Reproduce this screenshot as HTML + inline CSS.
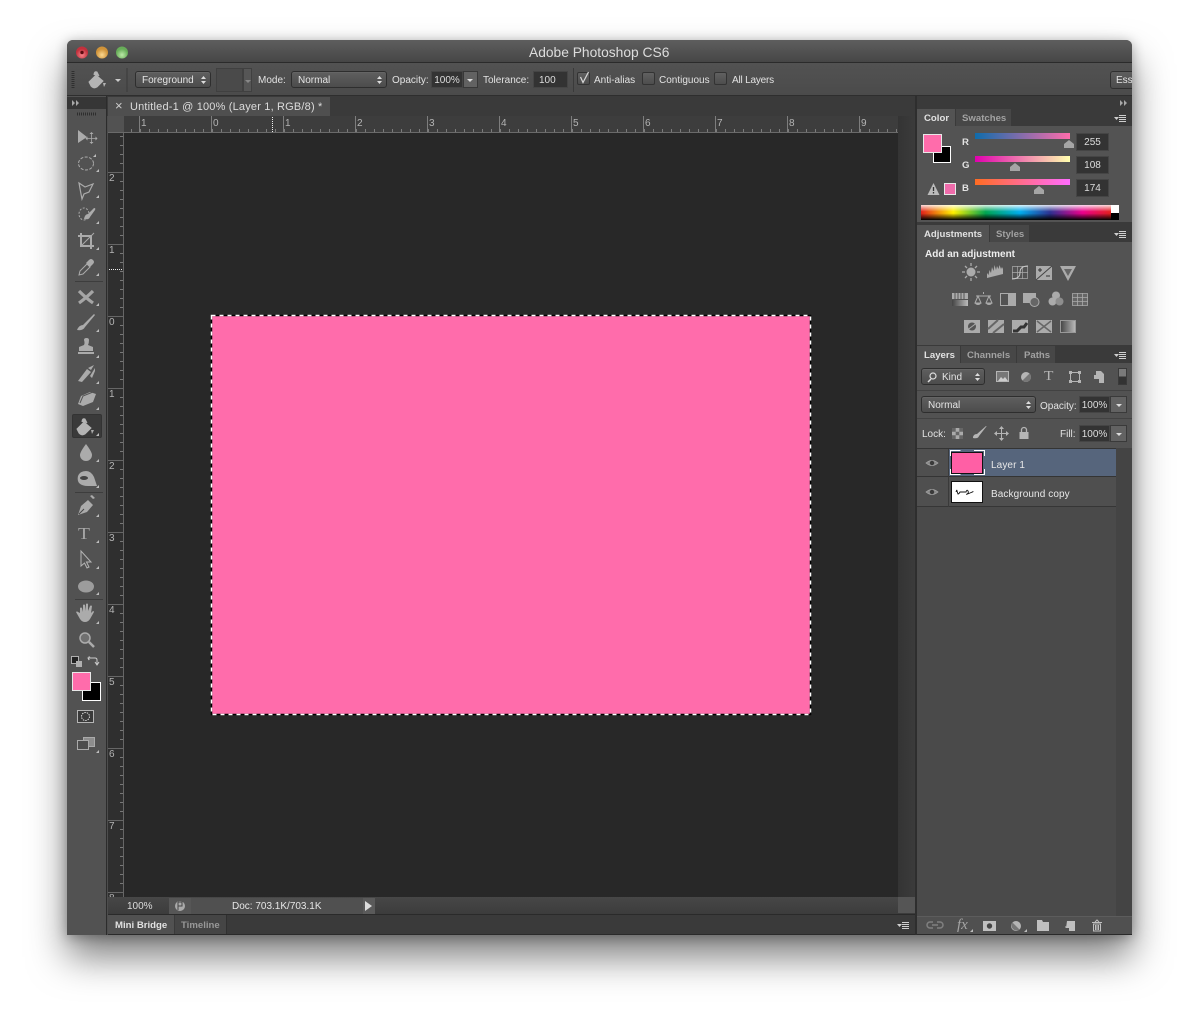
<!DOCTYPE html>
<html><head><meta charset="utf-8"><title>Adobe Photoshop CS6</title>
<style>
html,body{margin:0;padding:0;background:#fff;width:1199px;height:1024px;overflow:hidden}
body{position:relative;font-family:"Liberation Sans",sans-serif;font-size:10px;color:#e2e2e2}
.a{position:absolute}
.t{position:absolute;white-space:nowrap;line-height:12px;margin-top:1px}
.d{color:#a6a6a6}
.b{font-weight:bold;font-size:9.6px}
.sel{position:absolute;border:1px solid #2e2e2e;border-radius:3px;background:linear-gradient(#5f5f5f,#4c4c4c);box-shadow:0 1px 0 #656565 inset;box-sizing:border-box;padding-left:6px;line-height:17px;color:#e4e4e4;white-space:nowrap}
.inp{position:absolute;background:#333;border:1px solid #454545;box-sizing:border-box;color:#dedede;line-height:17px;text-align:center}
.chk{position:absolute;width:13px;height:13px;border:1px solid #333;border-radius:2px;background:linear-gradient(#616161,#4d4d4d);box-sizing:border-box}
.rl{position:absolute;color:#b4b4b4;font-size:10px;line-height:11px}
</style></head>
<body>
<!-- window -->
<div class="a" style="left:67px;top:40px;width:1065px;height:895px;border-radius:6px 6px 0 0;background:#4d4d4d;box-shadow:0 22px 38px rgba(0,0,0,.5),0 2px 12px rgba(0,0,0,.3)"></div>
<div class="a" style="left:67px;top:40px;width:1065px;height:23px;border-radius:6px 6px 0 0;background:linear-gradient(#5e5e5e,#464646);border-bottom:1px solid #2b2b2b;box-sizing:border-box"></div>
<div class="t" style="left:529px;top:44px;font-size:13.8px;line-height:16px;color:#dcdcdc">Adobe Photoshop CS6</div>
<!-- options -->
<div class="a" style="left:67px;top:63px;width:1065px;height:33px;background:linear-gradient(#525252,#4b4b4b);border-bottom:1px solid #2e2e2e;box-sizing:border-box"></div>
<div class="sel" style="left:135px;top:71px;width:76px;height:17px">Foreground</div>
<div class="a" style="left:216px;top:68px;width:27px;height:24px;background:#4a4a4a;border:1px solid #404040;box-sizing:border-box"></div>
<div class="a" style="left:243px;top:68px;width:9px;height:24px;background:#565656;border:1px solid #404040;box-sizing:border-box"></div>
<div class="t" style="left:258px;top:74px">Mode:</div>
<div class="sel" style="left:291px;top:71px;width:96px;height:17px">Normal</div>
<div class="t" style="left:392px;top:74px">Opacity:</div>
<div class="inp" style="left:431px;top:71px;width:32px;height:17px">100%</div>
<div class="a" style="left:463px;top:71px;width:15px;height:17px;background:#626262;border:1px solid #383838;box-sizing:border-box"></div>
<div class="t" style="left:483px;top:74px">Tolerance:</div>
<div class="inp" style="left:533px;top:71px;width:35px;height:17px;text-align:left;padding-left:5px">100</div>
<div class="a" style="left:573px;top:68px;width:1px;height:24px;background:#3a3a3a"></div>
<div class="chk" style="left:577px;top:72px"></div>
<div class="t" style="left:594px;top:74px">Anti-alias</div>
<div class="chk" style="left:642px;top:72px"></div>
<div class="t" style="left:659px;top:74px">Contiguous</div>
<div class="chk" style="left:714px;top:72px"></div>
<div class="t" style="left:732px;top:74px;letter-spacing:-.2px">All Layers</div>
<div class="a" style="left:1110px;top:71px;width:22px;height:18px;background:linear-gradient(#5e5e5e,#4c4c4c);border:1px solid #2f2f2f;border-right:0;border-radius:3px 0 0 3px;box-sizing:border-box;padding-left:5px;line-height:17px;color:#e4e4e4;overflow:hidden">Ess</div>
<!-- left toolbar -->
<div class="a" style="left:67px;top:96px;width:40px;height:839px;background:#525252;border-right:1px solid #2c2c2c;box-sizing:border-box"></div>
<div class="a" style="left:67px;top:97px;width:39px;height:12px;background:#363636"></div>
<div class="a" style="left:72px;top:414px;width:30px;height:24px;background:#3a3a3a;border:1px solid #333;border-radius:2px;box-sizing:border-box"></div>
<!-- doc area -->
<div class="a" style="left:107px;top:96px;width:808px;height:20px;background:#3a3a3a"></div>
<div class="a" style="left:108px;top:97px;width:222px;height:19px;background:#4f4f4f"></div>
<div class="t" style="left:115px;top:99px;font-size:13px;color:#ccc">×</div>
<div class="t" style="left:130px;top:100px;font-size:11px;line-height:13px;letter-spacing:.18px;color:#dcdcdc">Untitled-1 @ 100% (Layer 1, RGB/8) *</div>
<!-- h ruler -->
<div class="a" style="left:108px;top:116px;width:790px;height:17px;background:#3d3d3d;border-bottom:1px solid #6a6a6a;box-sizing:border-box"></div>
<div class="a" style="left:108px;top:116px;width:16px;height:16px;background:#525252"></div>
<div class="a" style="left:124px;top:129px;width:774px;height:3px;background:repeating-linear-gradient(90deg,#7b7b7b 0 1px,transparent 1px 9px);background-position:7px 0"></div>
<div class="a" style="left:124px;top:116px;width:774px;height:16px;background:repeating-linear-gradient(90deg,#7d7d7d 0 1px,transparent 1px 72px);background-position:15px 0"></div>
<div class="rl" style="left:141px;top:118px">1</div><div class="rl" style="left:213px;top:118px">0</div><div class="rl" style="left:285px;top:118px">1</div><div class="rl" style="left:357px;top:118px">2</div><div class="rl" style="left:429px;top:118px">3</div><div class="rl" style="left:501px;top:118px">4</div><div class="rl" style="left:573px;top:118px">5</div><div class="rl" style="left:645px;top:118px">6</div><div class="rl" style="left:717px;top:118px">7</div><div class="rl" style="left:789px;top:118px">8</div><div class="rl" style="left:861px;top:118px">9</div>
<!-- v ruler -->
<div class="a" style="left:108px;top:133px;width:16px;height:764px;background:#2f2f2f;border-right:1px solid #666;box-sizing:border-box"></div>
<div class="a" style="left:120px;top:133px;width:3px;height:764px;background:repeating-linear-gradient(180deg,#777 0 1px,transparent 1px 9px);background-position:0 3px"></div>
<div class="a" style="left:108px;top:133px;width:15px;height:764px;background:repeating-linear-gradient(180deg,#666 0 1px,transparent 1px 72px);background-position:0 39px"></div>
<div class="rl" style="left:109px;top:173px">2</div><div class="rl" style="left:109px;top:245px">1</div><div class="rl" style="left:109px;top:317px">0</div><div class="rl" style="left:109px;top:389px">1</div><div class="rl" style="left:109px;top:461px">2</div><div class="rl" style="left:109px;top:533px">3</div><div class="rl" style="left:109px;top:605px">4</div><div class="rl" style="left:109px;top:677px">5</div><div class="rl" style="left:109px;top:749px">6</div><div class="rl" style="left:109px;top:821px">7</div>
<div class="a" style="left:108px;top:893px;width:16px;height:4px;overflow:hidden"><div class="rl" style="left:1px;top:0">8</div></div>
<!-- canvas -->
<div class="a" style="left:124px;top:133px;width:774px;height:764px;background:#282828"></div>
<div class="a" style="left:212px;top:316px;width:598px;height:398px;background:#ff6cab"></div>
<div class="a" style="left:898px;top:116px;width:17px;height:781px;background:linear-gradient(90deg,#343434,#3b3b3b)"></div>
<div class="a" style="left:915px;top:96px;width:2px;height:839px;background:#2e2e2e"></div>
<!-- status -->
<div class="a" style="left:108px;top:897px;width:807px;height:18px;background:linear-gradient(#474747,#3c3c3c);border-bottom:1px solid #2a2a2a;box-sizing:border-box"></div>
<div class="a" style="left:898px;top:897px;width:17px;height:16px;background:#555"></div>
<div class="t" style="left:127px;top:900px;color:#ddd">100%</div>
<div class="a" style="left:169px;top:898px;width:22px;height:16px;background:#565656"></div>
<div class="a" style="left:191px;top:898px;width:172px;height:16px;background:#505050"></div>
<div class="t" style="left:232px;top:900px;color:#e6e6e6">Doc: 703.1K/703.1K</div>
<div class="a" style="left:363px;top:898px;width:12px;height:16px;background:#5a5a5a"></div>
<div class="a" style="left:108px;top:915px;width:807px;height:20px;background:#3a3a3a;border-bottom:1px solid #2a2a2a;box-sizing:border-box"></div>
<div class="a" style="left:108px;top:915px;width:66px;height:19px;background:#515151"></div>
<div class="a" style="left:175px;top:915px;width:52px;height:19px;background:#454545;border-right:1px solid #303030;box-sizing:border-box"></div>
<div class="t b" style="left:115px;top:919px">Mini Bridge</div>
<div class="t b d" style="left:181px;top:919px;color:#989898">Timeline</div>
<!-- right dock -->
<div class="a" style="left:917px;top:96px;width:215px;height:839px;background:#3a3a3a"></div>
<!-- color panel -->
<div class="a" style="left:917px;top:126px;width:215px;height:96px;background:#535353"></div>
<div class="a" style="left:917px;top:109px;width:38px;height:17px;background:#535353"></div>
<div class="a" style="left:956px;top:109px;width:55px;height:17px;background:#474747"></div>
<div class="t b" style="left:924px;top:112px">Color</div>
<div class="t b" style="left:962px;top:112px;color:#a2a2a2">Swatches</div>
<div class="a" style="left:975px;top:133px;width:95px;height:6px;background:linear-gradient(90deg,#0f6cab,#ff6cab)"></div>
<div class="a" style="left:975px;top:156px;width:95px;height:6px;background:linear-gradient(90deg,#e000ae,#ffffae)"></div>
<div class="a" style="left:975px;top:179px;width:95px;height:6px;background:linear-gradient(90deg,#ff6c22,#ff6cff)"></div>
<div class="t b" style="left:962px;top:136px">R</div>
<div class="t b" style="left:962px;top:159px">G</div>
<div class="t b" style="left:962px;top:182px">B</div>
<div class="inp" style="left:1076px;top:133px;width:33px;height:18px;line-height:17px">255</div>
<div class="inp" style="left:1076px;top:156px;width:33px;height:18px;line-height:17px">108</div>
<div class="inp" style="left:1076px;top:179px;width:33px;height:18px;line-height:17px">174</div>
<div class="a" style="left:921px;top:205px;width:190px;height:15px;background:linear-gradient(180deg,rgba(255,255,255,.85),rgba(255,255,255,0) 45%,rgba(0,0,0,0) 55%,#000 100%),linear-gradient(90deg,#e3201c 0%,#fff200 17%,#00a651 34%,#00aeef 52%,#2e3192 68%,#ec008c 85%,#e3201c 100%)"></div>
<div class="a" style="left:1111px;top:205px;width:8px;height:8px;background:#fff"></div>
<div class="a" style="left:1111px;top:213px;width:8px;height:7px;background:#000"></div>
<!-- adjustments -->
<div class="a" style="left:917px;top:242px;width:215px;height:103px;background:#535353"></div>
<div class="a" style="left:917px;top:225px;width:72px;height:17px;background:#535353"></div>
<div class="a" style="left:990px;top:225px;width:39px;height:17px;background:#474747"></div>
<div class="t b" style="left:924px;top:228px">Adjustments</div>
<div class="t b" style="left:996px;top:228px;color:#a2a2a2">Styles</div>
<div class="t b" style="left:925px;top:248px;color:#eee;font-size:10px">Add an adjustment</div>
<!-- layers -->
<div class="a" style="left:917px;top:363px;width:215px;height:85px;background:#525252"></div>
<div class="a" style="left:917px;top:390px;width:215px;height:1px;background:#424242"></div>
<div class="a" style="left:917px;top:418px;width:215px;height:1px;background:#424242"></div>
<div class="a" style="left:917px;top:346px;width:43px;height:17px;background:#525252"></div>
<div class="a" style="left:961px;top:346px;width:55px;height:17px;background:#474747"></div>
<div class="a" style="left:1017px;top:346px;width:38px;height:17px;background:#474747"></div>
<div class="t b" style="left:924px;top:349px">Layers</div>
<div class="t b" style="left:967px;top:349px;color:#a2a2a2">Channels</div>
<div class="t b" style="left:1024px;top:349px;color:#a2a2a2">Paths</div>
<div class="sel" style="left:921px;top:368px;width:64px;height:17px;padding-left:20px">Kind</div>
<div class="a" style="left:1118px;top:368px;width:9px;height:17px;background:linear-gradient(#7a7a7a 0 50%,#333 50%);border:1px solid #3a3a3a;box-sizing:border-box"></div>
<div class="sel" style="left:921px;top:396px;width:115px;height:17px">Normal</div>
<div class="t" style="left:1040px;top:400px">Opacity:</div>
<div class="inp" style="left:1079px;top:396px;width:31px;height:17px">100%</div>
<div class="a" style="left:1110px;top:396px;width:17px;height:17px;background:#626262;border:1px solid #3a3a3a;box-sizing:border-box"></div>
<div class="t" style="left:922px;top:428px">Lock:</div>
<div class="t" style="left:1060px;top:428px">Fill:</div>
<div class="inp" style="left:1079px;top:425px;width:31px;height:17px">100%</div>
<div class="a" style="left:1110px;top:425px;width:17px;height:17px;background:#626262;border:1px solid #3a3a3a;box-sizing:border-box"></div>
<!-- layer list -->
<div class="a" style="left:917px;top:448px;width:199px;height:468px;background:#4a4a4a"></div>
<div class="a" style="left:1116px;top:448px;width:16px;height:468px;background:#444"></div>
<div class="a" style="left:917px;top:448px;width:199px;height:29px;background:#56657c;border-top:1px solid #343434;border-bottom:1px solid #343434;box-sizing:border-box"></div>
<div class="a" style="left:917px;top:449px;width:31px;height:27px;background:#4f4f4f"></div>
<div class="a" style="left:917px;top:477px;width:199px;height:30px;background:#4f4f4f;border-bottom:1px solid #363636;box-sizing:border-box"></div>
<div class="a" style="left:948px;top:449px;width:1px;height:58px;background:#3a3a3a"></div>
<div class="a" style="left:951px;top:452px;width:32px;height:22px;background:#ff5fa5;border:1px solid #111;box-sizing:border-box"></div>
<div class="a" style="left:951px;top:481px;width:32px;height:22px;background:#fff;border:1px solid #111;box-sizing:border-box"></div>
<div class="t" style="left:991px;top:459px;color:#e8e8e8;letter-spacing:.1px">Layer 1</div>
<div class="t" style="left:991px;top:488px;color:#e8e8e8;letter-spacing:.1px">Background copy</div>
<div class="a" style="left:917px;top:916px;width:215px;height:19px;background:#505050;border-top:1px solid #5c5c5c;border-bottom:1px solid #2a2a2a;box-sizing:border-box"></div>
<div class="t" style="left:957px;top:917px;font:italic 15px/15px 'Liberation Serif',serif;color:#a5a5a5">fx</div>
<div class="t" style="left:78px;top:524px;font:17px/18px 'Liberation Serif',serif;color:#a8a8a8;transform:scaleX(1.15);transform-origin:left">T</div>
<div class="t" style="left:1044px;top:368px;font:14px/16px 'Liberation Serif',serif;color:#b5b5b5;transform:scaleX(1.1);transform-origin:left">T</div>
<!-- svg overlay: window lights, icons, details -->
<svg class="a" style="left:0;top:0" width="1199" height="1024" viewBox="0 0 1199 1024" xmlns="http://www.w3.org/2000/svg">
<defs>
<radialGradient id="lr" cy=".7"><stop offset="0" stop-color="#f7848a"/><stop offset="1" stop-color="#c2303c"/></radialGradient>
<radialGradient id="ly" cy=".7"><stop offset="0" stop-color="#fbd891"/><stop offset="1" stop-color="#cf9238"/></radialGradient>
<radialGradient id="lg" cy=".7"><stop offset="0" stop-color="#bce9a8"/><stop offset="1" stop-color="#67ad58"/></radialGradient>
<linearGradient id="h" x1="0" y1="0" x2="1" y2="0"><stop offset="0" stop-color="#444"/><stop offset="1" stop-color="#bbb"/></linearGradient>
<g id="menu"><path d="M0 2h5l-2.500 3z" fill="#cfcfcf"/><path d="M5 .5h7M5 2.500h7M5 4.500h7M5 6.500h7" stroke="#cfcfcf" stroke-width="1" fill="none"/></g>
<path id="tri" d="M0 3L3 0V3z" fill="#bdbdbd"/>
<g id="ud"><path d="M0 3l2.500-3 2.500 3zM0 5l2.500 3 2.500-3z" fill="#ddd"/></g>
<g id="eye"><path d="M-6 0Q0-5 6 0Q0 5-6 0z" fill="#8a8a8a" stroke="#a5a5a5" stroke-width=".8"/><circle r="2.200" fill="#3a3a3a"/></g>
<path id="thumb" d="M-5 7V3L0-1 5 3V7z" fill="#a5a5a5"/>
<path id="bucket" d="M-8 2L-1-5 6 1 0 7Q-3 9-6 6zM-3-5Q-3-9 0-8L2-4" fill="#b4b4b4" stroke="#b4b4b4" stroke-width="1"/>
</defs>
<circle cx="82" cy="52.500" r="6" fill="url(#lr)"/><circle cx="82" cy="52.500" r="1.700" fill="#5c0a10"/>
<circle cx="102" cy="52.500" r="6" fill="url(#ly)"/><circle cx="122" cy="52.500" r="6" fill="url(#lg)"/>
<!-- options icons -->
<path d="M73 71v17" stroke="#2f2f2f" stroke-width="3" stroke-dasharray="1 1"/>
<use href="#bucket" x="97" y="80"/><path d="M103 83l1 4 2-4z" fill="#b4b4b4"/>
<path d="M115 79h6l-3 3z" fill="#ccc"/><path d="M127 68v24" stroke="#3a3a3a"/>
<use href="#ud" x="201" y="76"/><use href="#ud" x="377" y="76"/>
<path d="M245 80h6l-3 3z" fill="#888"/><path d="M467 79h6l-3 3z" fill="#ddd"/>
<path d="M580.500 77l2.500 5.500 5.500-10.500" stroke="#d8d8d8" stroke-width="1.200" fill="none"/>
<!-- collapse arrows -->
<path d="M72 100l3 3-3 3zM76 100l3 3-3 3z" fill="#a8a8a8"/><path d="M1120 100l3 3-3 3zM1124 100l3 3-3 3z" fill="#a8a8a8"/>
<path d="M77 114h20" stroke="#2e2e2e" stroke-width="3" stroke-dasharray="1 1"/>
<!-- ruler markers -->
<path d="M272.500 117v15" stroke="#eee" stroke-dasharray="1 1"/><path d="M109 269.500h14" stroke="#eee" stroke-dasharray="1 1"/>
<!-- selection -->
<rect x="211.500" y="315.500" width="599" height="399" fill="none" stroke="#000" stroke-width="1.500"/>
<rect x="211.500" y="315.500" width="599" height="399" fill="none" stroke="#fff" stroke-width="1.500" stroke-dasharray="4 4"/>
<!-- tools -->
<g fill="#ababab" stroke="none">
<path d="M78 130v13l9-6z"/><path d="M91.500 134v8M87 138.500h9" stroke="#ababab" stroke-width=".8"/><path d="M91.500 132l-2 2h4zM91.500 144l-2-2h4zM85.500 138.500l2-2v4zM97.500 138.500l-2-2v4z"/>
<ellipse cx="86" cy="163.500" rx="7.500" ry="6.500" fill="none" stroke="#ababab" stroke-dasharray="3 1.500"/>
<path d="M79 183l6 4 8-3-4 8-5 2-2 5-1-5z" fill="none" stroke="#ababab" stroke-width="1.200"/>
<ellipse cx="84" cy="214" rx="5" ry="6" fill="none" stroke="#ababab" stroke-dasharray="2 1.500"/><path d="M84 219q1-5 4-5l6-6q2 0 1 2l-5 7q-1 3-6 2z"/>
<path d="M81 233v13h13M78 236h13v13" fill="none" stroke="#ababab" stroke-width="2"/><path d="M81 246l13-13" stroke="#ababab"/>
<path d="M79 275l1-4 7-7 3 3-7 7z" fill="none" stroke="#ababab"/><path d="M86 263l3-3q2-2 4 0t0 4l-3 3z"/>
<path d="M79 291Q86 298 93 303M79 303Q86 298 93 291" fill="none" stroke="#a5a5a5" stroke-width="3.200"/>
<path d="M77 330q2-5 6-5l11-11 1 1-10 12q-2 4-8 3z"/>
<path d="M84 340q0-2 2.500-2t2.500 2q0 3-1 5l5 2v4H79v-4l5-2q1-2 0-5zM78 352h16v2H78z"/>
<path d="M78 381l9-12 4 3-9 10zM88 368l6-3-3 5z"/><path d="M90 376l5-8v3l-3 7z"/>
<path d="M78 404l3-8 9-4 6 2-3 8-10 4z"/><path d="M80 403l3-7 10-4" stroke="#555" fill="none"/>
<use href="#bucket" x="85" y="427"/><path d="M91 430l1 4 2-4z"/>
<path d="M86 444q-6 8-6 11a6 6 0 0 0 12 0q0-3-6-11z"/>
<path d="M78 476q2-5 8-5 5 0 8 6l3 9H88q-6 0-9-3-2-3-1-7z"/><ellipse cx="84" cy="478" rx="4" ry="2" fill="#444"/>
<path d="M78 515l3-9 7-6 5 5-6 7zM93 499l-3-3 2-1 3 3z"/><path d="M79 514l5-5" stroke="#444"/>
<path d="M81 551v15l3.500-3 2.500 5 2-1-2.500-5h4.500z" fill="#555" stroke="#b5b5b5"/>
<ellipse cx="86" cy="586.500" rx="8" ry="6" fill="#9c9c9c"/>
<path d="M80 613v-5q1-1 2 0l1 4v-7q1-1 2 0l1 6v-7q1-1 2 0v7l2-5q1-1 2 0l-1 7 2-2q1 0 1 1l-4 7q-2 3-5 3t-5-3l-4-7q1-1 2 0z"/>
<circle cx="85" cy="638" r="5" fill="#707070" stroke="#ababab" stroke-width="1.500"/><path d="M89 642l5 5" stroke="#ababab" stroke-width="2.500"/>
<rect x="71.500" y="656.500" width="7" height="7" fill="#222" stroke="#ccc" stroke-width=".8"/><rect x="76" y="661" width="6" height="6" fill="#b0b0b0"/>
<path d="M90 657h-1v3l-1-2zM90 658h5q2 0 2 2v4M95 662l2 3 2-3" fill="none" stroke="#ccc"/>
</g>
<rect x="82.500" y="682.500" width="18" height="18" fill="#000" stroke="#fff"/>
<rect x="72.500" y="672.500" width="18" height="18" fill="#ff6cab" stroke="#e8e8e8"/>
<rect x="77.500" y="710.500" width="16" height="12" fill="#3a3a3a" stroke="#b5b5b5"/><circle cx="85.500" cy="716.500" r="4" fill="none" stroke="#ddd" stroke-dasharray="1.500 1"/>
<rect x="83.500" y="737.500" width="11" height="9" fill="#8d8d8d" stroke="#aaa"/><rect x="77.500" y="740.500" width="11" height="9" fill="#4d4d4d" stroke="#aaa"/>
<path d="M75 281.500h28M75 492.500h28M75 599.500h28" stroke="#3d3d3d"/>
<g><use href="#tri" x="93" y="154"/><use href="#tri" x="96" y="169"/><use href="#tri" x="96" y="195"/><use href="#tri" x="96" y="221"/><use href="#tri" x="96" y="247"/><use href="#tri" x="96" y="273"/><use href="#tri" x="96" y="303"/><use href="#tri" x="96" y="329"/><use href="#tri" x="96" y="355"/><use href="#tri" x="96" y="381"/><use href="#tri" x="96" y="407"/><use href="#tri" x="96" y="433"/><use href="#tri" x="96" y="459"/><use href="#tri" x="96" y="485"/><use href="#tri" x="96" y="514"/><use href="#tri" x="96" y="540"/><use href="#tri" x="96" y="566"/><use href="#tri" x="96" y="592"/><use href="#tri" x="96" y="621"/><use href="#tri" x="96" y="750"/></g>
<!-- status icons -->
<circle cx="180" cy="906" r="5" fill="#aaa"/><path d="M178 902v8M178 902h4v4h-4" stroke="#444" fill="none"/>
<path d="M365 901v10l7-5z" fill="#ddd"/>
<use href="#menu" x="897" y="922"/><use href="#menu" x="1114" y="115"/><use href="#menu" x="1114" y="231"/><use href="#menu" x="1114" y="352"/>
<!-- color swatch -->
<rect x="933.500" y="146.500" width="17" height="16" fill="#000" stroke="#fff"/>
<rect x="923.500" y="134.500" width="18" height="18" fill="#ff6cab" stroke="#e8e8e8"/>
<use href="#thumb" x="1069" y="141"/><use href="#thumb" x="1015" y="164"/><use href="#thumb" x="1039" y="187"/>
<path d="M933.500 183l6 12h-12z" fill="#bbb"/><path d="M933.500 187v4M933.500 192v1.500" stroke="#333" stroke-width="1.300"/>
<rect x="944.500" y="183.500" width="11" height="11" fill="#ef6cab" stroke="#e8e8e8"/>
<!-- adjustments icons -->
<g fill="#ababab" stroke="#ababab">
<circle cx="971" cy="272" r="4.500" stroke="none"/><path d="M971 263v3M971 278v3M962 272h3M977 272h3M965 266l2 2M975 276l2 2M977 266l-2 2M967 276l-2 2" fill="none" stroke-width="1.300"/>
<path d="M987 278v-5l1.500 2 1-5 1.500 3 1-6 1.500 4 1-6 1.500 5 1-4 1.500 3 1-4 1.500 4 1-2 1 2v5z" stroke="none"/>
<path d="M1012.500 266.500h15v12h-15zM1017.500 266v13M1022.500 266v13M1012 272.500h16" fill="none" stroke-width=".7"/><path d="M1012 279q8 0 8-6.500t8-6.500" fill="none" stroke="#c8c8c8"/>
<rect x="1036" y="266" width="16" height="14" stroke="none"/><path d="M1036 280l16-14z" stroke="#444"/><path d="M1038 270h4M1040 268v4M1046 276h4" stroke="#333" fill="none"/>
<path d="M1060 266h16l-8 15z" stroke="none"/><path d="M1064 269h8l-4 7z" fill="#666" stroke="none"/>
<rect x="952" y="293" width="16" height="6" stroke="none"/><path d="M955 293v6M958 293v6M961 293v6M964 293v6" stroke="#555"/><rect x="952" y="300" width="16" height="6" fill="url(#h)" stroke="none"/>
<path d="M983.500 292v2M976 296h15M978 296l-3 7h6zM989 296l-3 7h6z" fill="none"/><path d="M975 303a3 2 0 0 0 6 0zM986 303a3 2 0 0 0 6 0z" stroke="none"/>
<rect x="1000.500" y="293.500" width="15" height="12" fill="none"/><rect x="1008" y="293" width="8" height="13" stroke="none"/>
<rect x="1023" y="293" width="13" height="10" stroke="none"/><circle cx="1034.500" cy="302" r="4.500" fill="#666"/>
<circle cx="1056" cy="295.500" r="4" stroke="none"/><circle cx="1052.500" cy="301.500" r="4" stroke="none"/><circle cx="1059.500" cy="301.500" r="4" fill="#8e8e8e" stroke="none"/>
<path d="M1072.500 293.500h15v12h-15zM1077.500 293v13M1082.500 293v13M1072 297.500h16M1072 301.500h16" fill="#666" stroke-width=".8"/>
<rect x="964" y="320" width="16" height="13" stroke="none"/><ellipse cx="972" cy="326.500" rx="4" ry="4" fill="#555" stroke="none"/><path d="M966 331l12-9" stroke="#ababab"/>
<rect x="988" y="320" width="16" height="13" stroke="none"/><path d="M988 329l10-9M993 333l11-9" stroke="#666" stroke-width="2"/>
<rect x="1012" y="320" width="16" height="13" stroke="none"/><path d="M1013 331h4l4-4h3l3-4" stroke="#333" stroke-width="3" fill="none"/>
<rect x="1036" y="320" width="16" height="13" stroke="none"/><path d="M1037 321l14 11M1051 321l-14 11" stroke="#666" stroke-width="1.500"/>
<rect x="1060.500" y="320.500" width="15" height="12" fill="url(#h)" stroke="#999"/>
</g>
<!-- layers header icons -->
<circle cx="933" cy="376" r="3" fill="none" stroke="#ddd" stroke-width="1.200"/><path d="M931 379l-3 3" stroke="#ddd" stroke-width="1.500"/>
<use href="#ud" x="975" y="373"/><use href="#ud" x="1026" y="401"/>
<rect x="996.500" y="371.500" width="12" height="10" fill="#777" stroke="#b5b5b5"/><path d="M998 381l3-4 2 2 2-2 3 4z" fill="#ccc"/>
<circle cx="1026" cy="377" r="5" fill="#b5b5b5"/><path d="M1026 372a5 5 0 0 1 0 10z" fill="#777" transform="rotate(45 1026 377)"/>
<path d="M1070.500 372.500h9v9h-9z" fill="none" stroke="#b5b5b5"/><path d="M1069 371h3v3h-3zM1078 371h3v3h-3zM1069 380h3v3h-3zM1078 380h3v3h-3z" fill="#b5b5b5"/>
<path d="M1096 371h5l3 3v9h-5v-4h-5v-4h2z" fill="#b5b5b5"/>
<path d="M1116 404h6l-3 3z" fill="#ddd"/><path d="M1116 433h6l-3 3z" fill="#ddd"/>
<!-- lock row -->
<rect x="952" y="428" width="11" height="11" fill="#aaa"/><path d="M952 428h3.700v3.700H952zM959.300 428H963v3.700h-3.700zM955.700 431.700h3.600v3.600h-3.600zM952 435.300h3.700V439H952zM959.300 435.300H963V439h-3.700z" fill="#666"/>
<path d="M973 438q0-4 4-4l9-8q1 0 0 1l-7 9q-1 3-6 2z" fill="#b5b5b5"/>
<path d="M1001.500 427v13M995 433.500h13" stroke="#b5b5b5"/><path d="M1001.500 426l-2.500 3h5zM1001.500 441l-2.500-3h5zM994 433.500l3-2.500v5zM1009 433.500l-3-2.500v5z" fill="#b5b5b5"/>
<rect x="1019.500" y="432" width="9" height="7" fill="#b5b5b5"/><path d="M1021.500 432v-2a2 2 0 0 1 5 0v2" fill="none" stroke="#b5b5b5" stroke-width="1.300"/>
<!-- layers -->
<use href="#eye" x="932" y="463"/><use href="#eye" x="932" y="492"/>
<path d="M950.500 456v-5.500h10M974 450.500h10.500v5.500M984.500 469v5.500H974M960.500 474.500h-10V469" fill="none" stroke="#fff"/>
<path d="M956 492q1-3 1-1l1 3q1 0 2-2h6q1-3 2-1t-1 3 3-1 2-1" fill="none" stroke="#111" stroke-width=".9"/>
<!-- footer icons -->
<path d="M933 922h-3a3 3 0 0 0 0 6h3M937 922h3a3 3 0 0 1 0 6h-3M932 925h6" fill="none" stroke="#808080" stroke-width="1.500"/>
<use href="#tri" x="970" y="929"/><use href="#tri" x="1024" y="929"/>
<rect x="983" y="921" width="13" height="10" fill="#c0c0c0"/><circle cx="989.500" cy="926" r="2.700" fill="#444"/>
<circle cx="1016" cy="926" r="5" fill="#b5b5b5"/><path d="M1012.500 922.500a5 5 0 0 0 7 7z" fill="#777"/>
<path d="M1037 920h5l1 2h6v9h-12z" fill="#c0c0c0"/>
<path d="M1067 921h8v10h-6v-3h-3z" fill="#c0c0c0"/><path d="M1065 927h5v4" fill="none" stroke="#c0c0c0"/>
<path d="M1092 922.500h10M1095 922l2-2 2 2M1093.500 924h7v7h-7z" fill="none" stroke="#c0c0c0"/><path d="M1095.500 925v5M1097 925v5M1098.500 925v5" stroke="#c0c0c0"/>
</svg>
</body></html>
